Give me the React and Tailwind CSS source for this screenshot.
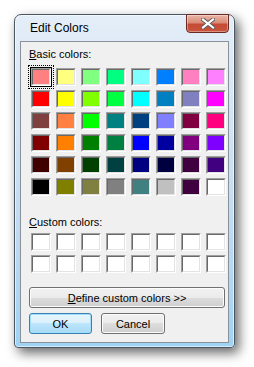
const basic = [
  ['#ff8080', '#ffff80', '#80ff80', '#00ff80', '#80ffff', '#0080ff', '#ff80c0', '#ff80ff'],
  ['#ff0000', '#ffff00', '#80ff00', '#00ff40', '#00ffff', '#0080c0', '#8080c0', '#ff00ff'],
  ['#804040', '#ff8040', '#00ff00', '#008080', '#004080', '#8080ff', '#800040', '#ff0080'],
  ['#800000', '#ff8000', '#008000', '#008040', '#0000ff', '#0000a0', '#800080', '#8000ff'],
  ['#400000', '#804000', '#004000', '#004040', '#000080', '#000040', '#400040', '#400080'],
  ['#000000', '#808000', '#808040', '#808080', '#408080', '#c0c0c0', '#400040', '#ffffff'],
];

function Swatch({ color, selected }) {
  return (
    <div className="relative h-[18px] w-[20px]">
      {selected && (
        <>
          <div className="absolute -inset-[3px] border border-dotted border-black" />
          <div className="absolute -inset-[1px] border border-black" />
        </>
      )}
      <div className="relative h-full w-full border-t border-l border-r border-b border-t-[#a0a0a0] border-l-[#a0a0a0] border-r-white border-b-white">
        <div
          className="h-full w-full border-t border-l border-r border-b border-t-[#696969] border-l-[#696969] border-r-[#e3e3e3] border-b-[#e3e3e3]"
          style={{ backgroundColor: color }}
        />
      </div>
    </div>
  );
}

function Button({ children, primary, className }) {
  return (
    <button
      className={
        'relative h-[21px] rounded-[3px] border text-[11px] text-black ' +
        (primary
          ? 'border-[#3c7fb1] bg-[linear-gradient(to_bottom,#eaf6fd_0%,#d9f0fc_50%,#bee6fd_50%,#a7d9f5_100%)] shadow-[inset_0_0_0_1px_#9ee0fa] '
          : 'border-[#707070] bg-[linear-gradient(to_bottom,#f2f2f2_0%,#ebebeb_50%,#dddddd_50%,#cfcfcf_100%)] shadow-[inset_0_0_0_1px_#fcfcfc] ') +
        className
      }
    >
      {children}
    </button>
  );
}

export default function App() {
  return (
    <div className="h-[367px] w-[254px] overflow-hidden bg-white pl-[14px] pt-[14px]" style={{ fontFamily: '"Liberation Sans", Arial, sans-serif' }}>
      <div className="flex h-[334px] w-[221px] flex-col rounded-t-[7px] rounded-b-[4px] border border-[#4a5662] bg-[linear-gradient(to_bottom,#e4eef8_0%,#d4e4f4_30%,#bcd9f1_70%,#9fd3f4_100%)] shadow-[4px_5px_12px_rgba(0,0,0,0.6),inset_0_0_0_1px_rgba(255,255,255,0.6)]">
        <div className="flex h-[26px] items-start justify-between">
          <span className="pl-[15px] pt-[6px] text-[12px] leading-[14px] text-black">Edit Colors</span>
          <div className="-mt-[1px] mr-[5px] flex h-[19px] w-[43px] items-center justify-center rounded-b-[4px] border border-[#6b2a23] bg-[linear-gradient(to_bottom,#eab6a8_0%,#d98c78_45%,#c44a36_55%,#c8563f_100%)] shadow-[inset_0_0_0_1px_rgba(255,255,255,0.35)]">
            <svg width="14" height="11" viewBox="0 0 14 11">
              <path d="M2 1.5 L12 9.5 M12 1.5 L2 9.5" stroke="#5a5a5a" strokeWidth="4" strokeLinecap="square" />
              <path d="M2 1.5 L12 9.5 M12 1.5 L2 9.5" stroke="#ffffff" strokeWidth="2.2" strokeLinecap="square" />
            </svg>
          </div>
        </div>
        <div className="mx-[5px] flex h-[302px] flex-col border border-[#8a9199] bg-[#f0f0f0] pl-[8px] pt-[5px] text-[11px] leading-[14px] text-black">
          <div>
            <span className="underline">B</span>asic colors:
          </div>
          <div className="ml-[2px] mt-[7px] grid grid-cols-[repeat(8,20px)] gap-x-[5px] gap-y-[4px]">
            {basic.flat().map((c, i) => (
              <Swatch key={i} color={c} selected={i === 0} />
            ))}
          </div>
          <div className="mt-[19px]">
            <span className="underline">C</span>ustom colors:
          </div>
          <div className="ml-[2px] mt-[4px] grid grid-cols-[repeat(8,20px)] gap-x-[5px] gap-y-[4px]">
            {Array.from({ length: 16 }).map((_, i) => (
              <Swatch key={i} color="#ffffff" />
            ))}
          </div>
          <Button className="mt-[14px] w-[196px]">
            <span className="underline">D</span>efine custom colors &gt;&gt;
          </Button>
          <div className="mt-[5px] flex gap-[9px]">
            <Button primary className="w-[63px]">OK</Button>
            <Button className="w-[64px]">Cancel</Button>
          </div>
        </div>
      </div>
    </div>
  );
}
